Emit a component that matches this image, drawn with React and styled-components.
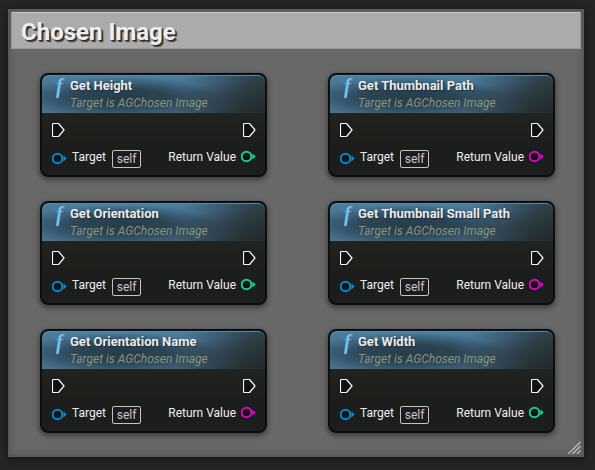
import React, { useId } from "react";
import styled, { createGlobalStyle } from "styled-components";

const GlobalStyle = createGlobalStyle`
  * { box-sizing: border-box; }
  body {
    margin: 0;
    background: #262626;
    font-family: Roboto, "Liberation Sans", sans-serif;
  }
`;

const Canvas = styled.main`
  padding: 9px 11px 13px 8px;
  min-height: 100vh;
  background: #262626;
`;

const CommentBox = styled.section`
  position: relative;
  padding: 3px 3px 24px;
  background: #686868;
  box-shadow: inset 0 0 0 2px #5a5a5a, inset 0 0 9px #505050, 0 2px 8px 1px #151515;
`;

const CommentTitle = styled.h1`
  margin: 0;
  height: 37px;
  padding: 0 9px;
  border: 1px solid #999;
  border-top-color: #c4c4c4;
  border-radius: 2px 2px 0 0;
  background: #ababab;
  color: #eee;
  font-size: 24px;
  line-height: 38px;
  font-weight: 700;
  text-shadow: 1px 1px 0 #333, 2px 2px 1px #333;
`;

const NodeGrid = styled.div`
  display: grid;
  grid-template-columns: 1fr 1fr;
  gap: 24px 61px;
  padding: 24px 26px 0 29px;
`;

const Node = styled.article`
  border: 2px solid #0d0e0e;
  border-radius: 8px;
  background: linear-gradient(#20231f, #20231f 40px, #1b1e1c 70px);
  box-shadow: 0 2px 5px 1px rgba(0, 0, 0, 0.4);
  overflow: hidden;
`;

const NodeHeader = styled.header`
  display: flex;
  height: 38px;
  padding: 0 10px;
  gap: 4px;
  border-radius: 6px 6px 0 0;
  box-shadow: inset 0 1px 0 #558cad;
  background:
    radial-gradient(ellipse 110px 34px at 100% 100%, rgba(31, 37, 38, 0.8), transparent),
    linear-gradient(90deg, transparent 62%, rgba(45, 59, 67, 0.85) 92%, #2e3c43),
    radial-gradient(ellipse 100px 21px at 36% 60%, #263c4a, rgba(38, 60, 74, 0.85) 45%, transparent),
    linear-gradient(#4d7f9f, #456f8c 50%, #487391);
`;

const FunctionMark = styled.span`
  width: 14px;
  padding-left: 4px;
  color: #70c1f4;
  font: italic 700 20px/22px "Liberation Serif", serif;
`;

const Titles = styled.div`
  white-space: nowrap;
`;

const NodeTitle = styled.h2`
  margin: 0;
  padding-top: 2px;
  color: #eaeaea;
  font-size: 13px;
  line-height: 18px;
  font-weight: 700;
  text-shadow: 1px 1px 1px #1c2e3a;
`;

const Subtitle = styled.p`
  margin: 0;
  color: #87947a;
  font-size: 12px;
  line-height: 16px;
  font-style: italic;
`;

const Pins = styled.div`
  padding: 9px 9px 6px 10px;
`;

const PinRow = styled.div`
  display: flex;
  justify-content: space-between;
  align-items: ${(p) => (p.$top ? "flex-start" : "center")};
  height: ${(p) => (p.$top ? 20 : 16)}px;
  margin-top: ${(p) => (p.$top ? 11 : 0)}px;
`;

const Pin = styled.div`
  display: flex;
  align-items: flex-start;
  gap: 5px;
  color: #eee;
  font-size: 12px;
  line-height: 16px;
  white-space: nowrap;
`;

const PinLabel = styled.label`
  color: #eee;
`;

const SelfField = styled.input`
  width: 29px;
  height: 18px;
  margin: 1px 0 0 1px;
  padding: 0;
  border: 1px solid #c3c3c3;
  border-radius: 2px;
  background: transparent;
  color: #ccc;
  font: 12px/16px Roboto, "Liberation Sans", sans-serif;
  text-align: center;
  outline: none;
`;

const Icon = styled.svg`
  display: block;
  flex: none;
  margin-top: ${(p) => p.$drop || 0}px;
`;

const ResizeGrip = styled.svg`
  position: absolute;
  right: 3px;
  bottom: 3px;
`;

const ExecPin = () => (
  <Icon width="13" height="16" viewBox="0 0 13 16" aria-hidden="true">
    <path
      d="M1.500 1.500h5L12 8l-5.500 6.500h-5q-1 0-1-1v-11q0-1 1-1z"
      fill="#101211"
      stroke="#f4f4f4"
      strokeWidth="1.2"
      strokeLinejoin="round"
    />
  </Icon>
);

const DataPin = ({ color, drop }) => (
  <Icon $drop={drop} width="15" height="13" viewBox="0 0 15 13" aria-hidden="true">
    <circle cx="5.5" cy="6.5" r="4.8" fill="#0c1416" stroke={color} strokeWidth="2" />
    <path d="M11.400 3.400l3.500 3.100-3.500 3.100z" fill={color} />
  </Icon>
);

const BLUE = "#078ad0";
const GREEN = "#1bcb94";
const MAGENTA = "#e500c4";

const nodes = [
  { title: "Get Height", color: GREEN },
  { title: "Get Thumbnail Path", color: MAGENTA },
  { title: "Get Orientation", color: GREEN },
  { title: "Get Thumbnail Small Path", color: MAGENTA },
  { title: "Get Orientation Name", color: MAGENTA },
  { title: "Get Width", color: GREEN },
];

function FunctionNode({ title, color }) {
  const id = useId();
  return (
    <Node>
      <NodeHeader>
        <FunctionMark aria-hidden="true">f</FunctionMark>
        <Titles>
          <NodeTitle>{title}</NodeTitle>
          <Subtitle>Target is AGChosen Image</Subtitle>
        </Titles>
      </NodeHeader>
      <Pins>
        <PinRow>
          <ExecPin />
          <ExecPin />
        </PinRow>
        <PinRow $top>
          <Pin>
            <DataPin color={BLUE} drop={3} />
            <PinLabel htmlFor={id}>Target</PinLabel>
            <SelfField id={id} value="self" readOnly />
          </Pin>
          <Pin>
            <span>Return Value</span>
            <DataPin color={color} drop={1} />
          </Pin>
        </PinRow>
      </Pins>
    </Node>
  );
}

export default function App() {
  return (
    <>
      <GlobalStyle />
      <Canvas>
        <CommentBox>
          <CommentTitle>Chosen Image</CommentTitle>
          <NodeGrid>
            {nodes.map((n) => (
              <FunctionNode key={n.title} {...n} />
            ))}
          </NodeGrid>
          <ResizeGrip width="13" height="12" viewBox="0 0 13 12" aria-hidden="true">
            <path d="M0 12L12.500 0M4.500 12L12.500 4M9 12l3.500-3.500" stroke="#c2c2c2" strokeWidth="1.2" />
          </ResizeGrip>
        </CommentBox>
      </Canvas>
    </>
  );
}
